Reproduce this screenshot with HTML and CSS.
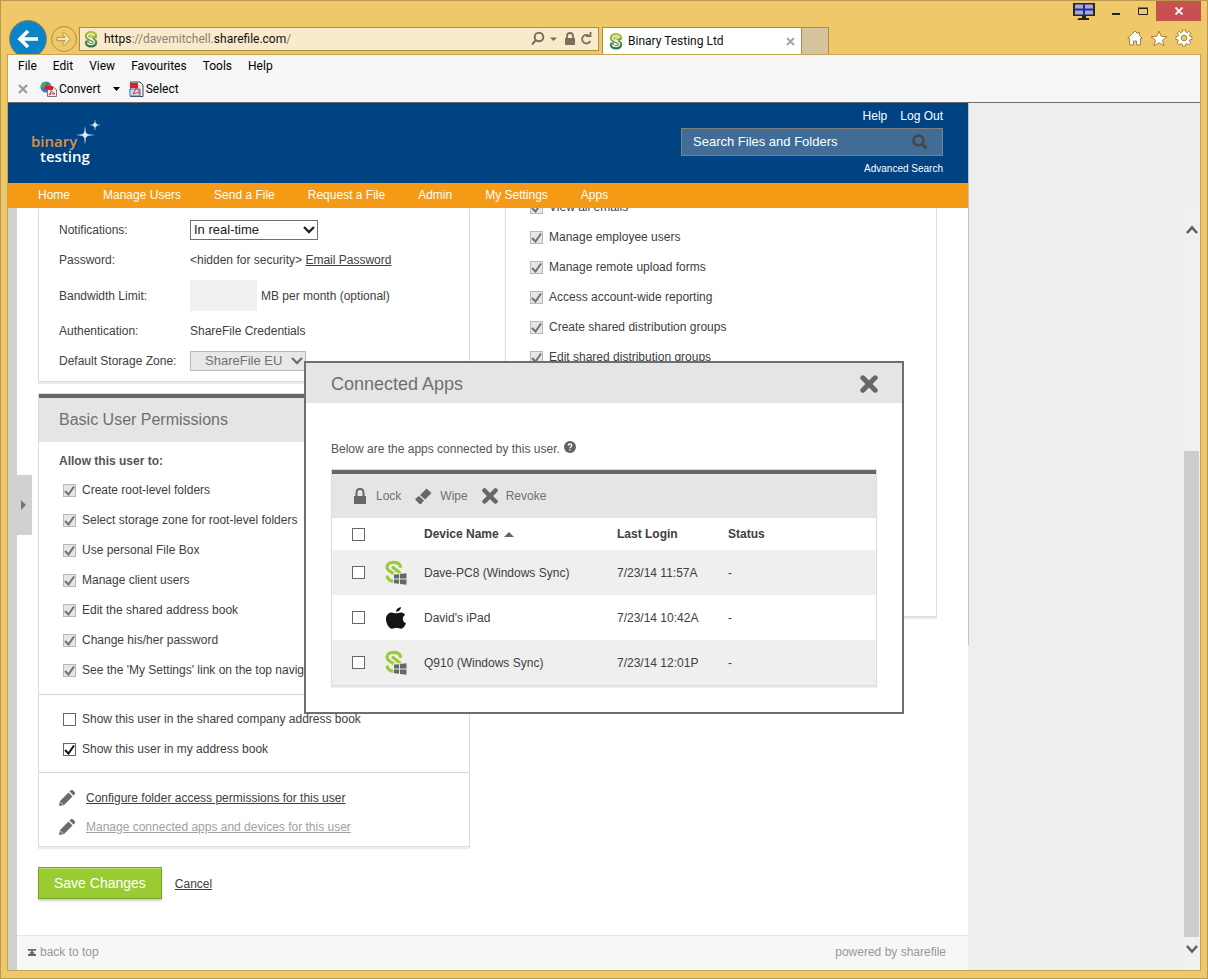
FILE: index.html
```
<!DOCTYPE html>
<html lang="en">
<head>
<meta charset="utf-8">
<title>Binary Testing Ltd</title>
<link rel="stylesheet" href="styles.css">
</head>
<body>
<svg class="defs" aria-hidden="true">
  <symbol id="i-favicon" viewBox="0 0 14 18">
    <defs><linearGradient id="fav" x1="0" y1="0" x2="0" y2="1"><stop offset="0" stop-color="#b4c032"/><stop offset="1" stop-color="#2f7a4a"/></linearGradient></defs>
    <path d="M11 6C10.500 2.500 3 2 3 6c0 3.500 8 2.500 8 6.500 0 4-7.500 3.500-8 0" fill="none" stroke="url(#fav)" stroke-width="4.500" stroke-linecap="round"/>
    <path d="M10.500 6C10 3.500 3.500 3 3.500 6.300c0 3 7 2.500 7 6 0 3.200-6.500 2.700-7 .2M6 7.500l3 2" fill="none" stroke="#f4f8e4" stroke-width="1.300"/>
  </symbol>
  <symbol id="i-share" viewBox="0 0 22 25">
    <path d="M15.500 6.500C14 .8 2 1 2 7c0 2 1 3 2.500 4l8 5.500M8 7.500l5.500 4.200c4.500 3.500 2.500 9.800-3 9.800C6 21.500 3.500 20.500 2.300 17" fill="none" stroke="#98cb36" stroke-width="3.200" stroke-linecap="round"/>
    <path d="M8 13h14v12H8z" fill="#efefef" opacity=".75"/>
    <path d="M9 14.800l5-.6v4.300H9zM15 14l6.500-.8v5.300H15zM9 19.500h5v4.300l-5-.6zM15 19.500h6.500v5.300L15 24z" fill="#66676a"/>
  </symbol>
  <symbol id="i-pencil" viewBox="0 0 16 16">
    <path d="M0 16l1-5 8.500-8.500L13.500 6.500 5 15zM10.500 1.500L12 0h1.500L16 2.500V4l-1.500 1.500z" fill="#6a6b6e"/>
    <path d="M1.500 12l2.500 2.500" stroke="#fff" stroke-width=".8"/>
  </symbol>
  <symbol id="i-cross" viewBox="0 0 16 16">
    <path d="M2.500 2.500l11 11M13.500 2.500l-11 11" stroke="#66676a" stroke-width="4.500" stroke-linecap="round"/>
  </symbol>
</svg>

<div class="window">
  <header class="chrome">
    <div class="travel">
      <button class="back" type="button" aria-label="Back"><svg width="22" height="20" viewBox="0 0 22 20"><path d="M11 2L3 10l8 8M3.500 10H21" fill="none" stroke="#fff" stroke-width="3.600"/></svg></button>
      <button class="forward" type="button" aria-label="Forward"><svg width="16" height="14" viewBox="0 0 16 14"><path d="M1 5.300h8L6 2l2-1.500L14.500 7 8 13.500 6 12l3-3.300H1z" fill="#f6e3b4" stroke="#b08f42" stroke-width="1"/></svg></button>
    </div>
    <div class="address">
      <svg width="14" height="18"><use href="#i-favicon"/></svg>
      <span class="url"><i>https</i>://davemitchell.<i>sharefile.com</i>/</span>
      <svg width="62" height="16" viewBox="0 0 62 16" fill="none" stroke="#77705c" stroke-width="2"><circle cx="8" cy="6" r="4.300"/><path d="M5 9l-4 4.500"/><path d="M19 6.500h7L22.500 10z" fill="#77705c" stroke="none"/><path d="M34 7h10v7H34z" fill="#77705c" stroke="none"/><path d="M36 8V5q0-3 3-3t3 3v3" stroke-width="1.800"/><path d="M58.500 5.200A4.300 4.300 0 1 0 59.300 10M55 5.200h4.500V1"  stroke-width="1.800"/></svg>
    </div>
    <div class="tabs">
      <div class="tab"><svg width="14" height="18"><use href="#i-favicon"/></svg><span>Binary Testing Ltd</span><svg width="9" height="9" viewBox="0 0 9 9"><path d="M1 1l7 7M8 1L1 8" stroke="#a6a6a6" stroke-width="2"/></svg></div>
      <button class="newtab" type="button" aria-label="New tab"></button>
    </div>
    <div class="corner">
      <div class="controls">
        <svg class="monitor" width="22" height="17" viewBox="0 0 22 17"><path d="M0 0h22v13H0z" fill="#26262b"/><path d="M2 1.500h18v10H2z" fill="#a9a6dc"/><path d="M10 1h2v11h-2zM2 5.500h18v2H2z" fill="#2b2a9a"/><path d="M9 13h4v2h3v2H4l2-2h3z" fill="#222"/></svg>
        <button type="button" aria-label="Minimise"><svg width="10" height="10" viewBox="0 0 10 10"><path d="M1 8h8" stroke="#222" stroke-width="2"/></svg></button>
        <button type="button" aria-label="Maximise"><svg width="10" height="8" viewBox="0 0 10 8"><path d="M.5 1.500h9v6h-9zM0 1h10" fill="none" stroke="#222" stroke-width="1"/></svg></button>
        <button class="close" type="button" aria-label="Close"><svg width="8" height="8" viewBox="0 0 8 8"><path d="M.5.5l7 7M7.500.5l-7 7" stroke="#fff" stroke-width="1.800"/></svg></button>
      </div>
      <div class="shortcuts">
        <svg width="16" height="16" viewBox="0 0 16 16"><path d="M8 1L.7 8.300h1.800V15h4v-4h3v4h4V8.300h1.800L12.500 5.500V2.500h-1.700v1.300z" fill="#fff" stroke="#a4843c" stroke-width="1"/></svg>
        <svg width="18" height="17" viewBox="0 0 18 17"><path d="M9 1l2.200 5.300 5.800.3-4.500 3.600 1.500 5.600L9 12.700l-5 3.100 1.500-5.600L1 6.600l5.800-.3z" fill="#fff" stroke="#a4843c" stroke-width="1"/></svg>
        <svg width="18" height="18" viewBox="0 0 18 18"><path d="M7.500 1h3l.4 2 1.300.6L14 2.400 15.800 4.200 14.500 6l.5 1.500 2 .4v2.500l-2 .4-.6 1.400 1.300 1.800-1.900 1.900-1.800-1.200-1.400.5-.4 2h-2.600l-.4-2-1.500-.5-1.800 1.200-1.800-1.900 1.200-1.800L2.900 10.800l-2-.4V7.900l2-.4L3.500 6 2.300 4.200 4.100 2.400l1.800 1.200L7.200 3z" fill="#fff" stroke="#a4843c" stroke-width="1"/><circle cx="9" cy="9" r="2.800" fill="#efc869" stroke="#a4843c"/></svg>
      </div>
    </div>
  </header>

  <div class="client">
    <div class="bars">
      <nav class="menubar" aria-label="Browser menu"><span>File</span><span>Edit</span><span>View</span><span>Favourites</span><span>Tools</span><span>Help</span></nav>
      <div class="toolbar">
        <svg width="10" height="10" viewBox="0 0 10 10"><path d="M1 1l8 8M9 1L1 9" stroke="#999" stroke-width="2"/></svg>
        <span class="tool"><svg width="17" height="16" viewBox="0 0 17 16"><circle cx="6" cy="6" r="5.500" fill="#3a79c8"/><path d="M2 2q3-2 4 0l-1 3-3 2-1.500-1zM7 6l3-3 1.500 3-3 3z" fill="#57ab3a"/><path d="M7.500 5.500h5l4 3v7h-9z" fill="#f3f3f3" stroke="#777"/><path d="M5 5h8v4H5z" fill="#e02020"/><path d="M9 14q3-4 2-4.500t4 3.500q-4-1-6 1z" fill="none" stroke="#d33"/></svg>Convert</span>
        <svg class="caret" width="7" height="4" viewBox="0 0 7 4"><path d="M0 0h7L3.500 4z"/></svg>
        <span class="tool"><svg width="15" height="16" viewBox="0 0 15 16"><path d="M1.500 1h9.500l3 3v11.500H1.500z" fill="#f3f3f3" stroke="#444"/><path d="M1 2h8v5H1z" fill="#e02020"/><path d="M1 8h10v7H1z" fill="#cfe0f6" stroke="#3a6dc0"/><path d="M4 13q3-5 3-6t4 5q-4-1-7 1z" fill="none" stroke="#d33"/></svg>Select</span>
      </div>
    </div>

    <div class="viewport">
      <div class="site">
        <header class="masthead">
          <a class="brand" href="#"><span class="brand-a">binary</span><span class="brand-b">testing</span>
            <svg class="sparks" width="30" height="30" viewBox="0 0 30 30" fill="#dfeaf6"><path d="M10 8l1 8 9 1-9 1-1 9-1-9-8-1 8-1zM20 1l.8 5.200L26 7l-5.200.8L20 13l-.8-5.200L14 7l5.200-.8z"/><circle cx="10" cy="17" r="2.500"/><circle cx="20" cy="7" r="2"/></svg></a>
          <div class="account">
            <div class="account-links"><a href="#">Help</a><a href="#">Log Out</a></div>
            <form class="search">
              <input type="text" placeholder="Search Files and Folders" aria-label="Search Files and Folders">
              <button type="button" aria-label="Search"><svg width="16" height="16" viewBox="0 0 16 16" fill="none" stroke="#474747"><circle cx="6.500" cy="6.500" r="5" stroke-width="2.400"/><path d="M10 10l4.500 4.500" stroke-width="3"/></svg></button>
            </form>
            <a class="advanced" href="#">Advanced Search</a>
          </div>
        </header>
        <nav class="mainnav"><a href="#">Home</a><a href="#">Manage Users</a><a href="#">Send a File</a><a href="#">Request a File</a><a href="#">Admin</a><a href="#">My Settings</a><a href="#">Apps</a></nav>

        <div class="body">
          <button class="drawer" type="button" aria-label="Open side panel"><svg width="5" height="10" viewBox="0 0 5 10"><path d="M0 0l5 5-5 5z" fill="#777"/></svg></button>
          <main class="main">
            <div class="columns">
              <div class="column">
                <section class="card details">
                  <div class="field"><label for="notify">Notifications:</label><span class="pick"><select id="notify"><option>In real-time</option></select><svg width="12" height="8" viewBox="0 0 12 8"><path d="M1 1l5 5 5-5" fill="none" stroke="#222" stroke-width="2.400"/></svg></span></div>
                  <div class="field"><span>Password:</span><span>&lt;hidden for security&gt; <a href="#">Email Password</a></span></div>
                  <div class="field tall"><label for="bw">Bandwidth Limit:</label><span class="limit"><input id="bw" type="text" disabled> MB per month (optional)</span></div>
                  <div class="field"><span>Authentication:</span><span>ShareFile Credentials</span></div>
                  <div class="field"><label for="zone">Default Storage Zone:</label><span class="pick zone"><select id="zone" disabled><option>ShareFile EU</option></select><svg width="12" height="8" viewBox="0 0 12 8"><path d="M1 1l5 5 5-5" fill="none" stroke="#707070" stroke-width="2.400"/></svg></span></div>
                </section>

                <section class="card perms">
                  <h2>Basic User Permissions</h2>
                  <h3>Allow this user to:</h3>
                  <div class="checks">
                    <label><input type="checkbox" checked disabled>Create root-level folders</label>
                    <label><input type="checkbox" checked disabled>Select storage zone for root-level folders</label>
                    <label><input type="checkbox" checked disabled>Use personal File Box</label>
                    <label><input type="checkbox" checked disabled>Manage client users</label>
                    <label><input type="checkbox" checked disabled>Edit the shared address book</label>
                    <label><input type="checkbox" checked disabled>Change his/her password</label>
                    <label><input type="checkbox" checked disabled>See the 'My Settings' link on the top navigation bar</label>
                  </div>
                  <div class="checks ruled">
                    <label><input type="checkbox">Show this user in the shared company address book</label>
                    <label><input type="checkbox" checked>Show this user in my address book</label>
                  </div>
                  <div class="links ruled">
                    <div><svg width="16" height="16"><use href="#i-pencil"/></svg><a href="#">Configure folder access permissions for this user</a></div>
                    <div><svg width="16" height="16"><use href="#i-pencil"/></svg><a class="dim" href="#">Manage connected apps and devices for this user</a></div>
                  </div>
                </section>

                <div class="actions"><button class="save" type="button">Save Changes</button><a href="#">Cancel</a></div>
              </div>

              <div class="column">
                <section class="card admin">
                  <div class="checks">
                    <label><input type="checkbox" checked disabled>View all emails</label>
                    <label><input type="checkbox" checked disabled>Manage employee users</label>
                    <label><input type="checkbox" checked disabled>Manage remote upload forms</label>
                    <label><input type="checkbox" checked disabled>Access account-wide reporting</label>
                    <label><input type="checkbox" checked disabled>Create shared distribution groups</label>
                    <label><input type="checkbox" checked disabled>Edit shared distribution groups</label>
                  </div>
                </section>
              </div>
            </div>
            <footer class="footer">
              <a href="#"><svg width="8" height="7" viewBox="0 0 8 7"><path d="M0 0h8v1.800H0zM4 1.500l3 3H5.200V5H8v2H0V5h2.800v-.5H1z" fill="#666"/></svg>back to top</a>
              <span>powered by sharefile</span>
            </footer>
          </main>
        </div>
      </div>

      <div class="gutter">
        <div class="scrollbar" aria-hidden="true">
          <svg width="12" height="9" viewBox="0 0 12 9"><path d="M1 8l5-5.500L11 8" fill="none" stroke="#606060" stroke-width="2.600"/></svg>
          <div class="thumb"></div>
          <svg width="12" height="9" viewBox="0 0 12 9"><path d="M1 1l5 5.500L11 1" fill="none" stroke="#606060" stroke-width="2.600"/></svg>
        </div>
      </div>
    </div>
  </div>

  <section class="modal" role="dialog" aria-labelledby="modal-title">
    <header><h2 id="modal-title">Connected Apps</h2><button type="button" aria-label="Close"><svg width="18" height="18"><use href="#i-cross"/></svg></button></header>
    <div class="modal-body">
      <p>Below are the apps connected by this user. <svg width="12" height="12" viewBox="0 0 12 12"><circle cx="6" cy="6" r="6" fill="#626262"/><path d="M4.200 4.800Q4.300 3 6 3t1.800 1.600Q7.800 5.500 6.800 6 6 6.400 6 7.200M6 8.200v1.300" fill="none" stroke="#fff" stroke-width="1.300"/></svg></p>
      <div class="card apps">
        <div class="apps-tools">
          <button type="button"><svg width="16" height="16" viewBox="0 0 16 16"><path d="M2 8h12v8H2z" fill="#66676a"/><path d="M4.500 8V5q0-4 3.500-4t3.500 4v3" fill="none" stroke="#66676a" stroke-width="2"/></svg>Lock</button>
          <button type="button"><svg width="17" height="16" viewBox="0 0 17 16"><path d="M5 7L11.500.5 16.500 5 10 11.500zM4 8l5 4.500L6 16H4.500L.5 12v-1.500z" fill="#66676a"/></svg>Wipe</button>
          <button type="button"><svg width="16" height="16"><use href="#i-cross"/></svg>Revoke</button>
        </div>
        <table>
          <colgroup><col class="c-check"><col class="c-icon"><col class="c-name"><col class="c-login"><col></colgroup>
          <thead><tr><th><input type="checkbox" aria-label="Select all"></th><th></th><th>Device Name <svg width="10" height="5" viewBox="0 0 10 5"><path d="M5 0l5 5H0z" fill="#666"/></svg></th><th>Last Login</th><th>Status</th></tr></thead>
          <tbody>
            <tr><td><input type="checkbox" aria-label="Dave-PC8"></td><td><svg width="22" height="25"><use href="#i-share"/></svg></td><td>Dave-PC8 (Windows Sync)</td><td>7/23/14 11:57A</td><td>-</td></tr>
            <tr><td><input type="checkbox" aria-label="David's iPad"></td><td><svg width="22" height="25" viewBox="0 0 22 25"><path d="M16 2q0 4-5 5 0-4 5-5zM6 7.500c2-.5 3.500 1 5.200.8 1.800 0 3-1 5-.8 2 .2 3.200 1.200 4 2.300-3.500 2.200-3 6.800.8 8.400-1 2.600-2.800 5.300-4.800 5.500-1.800.1-2.600-1-4.700-1s-3 1.100-4.700 1C4 23.500 1.200 18.800 1 14.500c-.1-4 2-6.500 5-7z" fill="#151515"/></svg></td><td>David's iPad</td><td>7/23/14 10:42A</td><td>-</td></tr>
            <tr><td><input type="checkbox" aria-label="Q910"></td><td><svg width="22" height="25"><use href="#i-share"/></svg></td><td>Q910 (Windows Sync)</td><td>7/23/14 12:01P</td><td>-</td></tr>
          </tbody>
        </table>
      </div>
    </div>
  </section>
</div>
</body>
</html>
```

FILE: styles.css
```
* { box-sizing: border-box; }
body { margin: 0; font: 12px/16px "Liberation Sans", Arial, sans-serif; color: #404040; }
h2, h3, p { margin: 0; font-weight: normal; }
a { color: inherit; }
svg { display: block; flex: none; }
button { padding: 0; border: 0; background: none; font: inherit; color: inherit; }
.defs { position: absolute; width: 0; height: 0; }

.window { position: relative; display: flex; flex-direction: column; min-height: 100vh; border: 1px solid #b8994f; background: #efc869; }

/* Browser chrome */
.chrome { display: flex; height: 53px; overflow: hidden; font-family: Roboto, sans-serif; color: #111; }
.travel { display: flex; flex: none; align-items: center; gap: 4px; width: 78px; padding: 18px 0 0 8px; height: 57px; }
.back { display: grid; place-items: center; width: 38px; height: 38px; border: 1px solid #9a8148; border-radius: 50%; background: #0a84c6; }
.forward { display: grid; place-items: center; width: 26px; height: 26px; border: 1px solid #b08f42; border-radius: 50%; }
.address { display: flex; flex: 1 1 520px; align-items: center; gap: 6px; min-width: 0; height: 24px; margin: 26px 3px 0 0; padding: 0 5px 0 4px; border: 1px solid #a98c45; background: #f9eacb; }
.url { flex: 1; color: #8a8270; }
.url i { font-style: normal; color: #111; }
.tabs { display: flex; flex: none; padding-top: 26px; }
.tab { display: flex; align-items: center; gap: 5px; width: 200px; padding: 0 6px; border: solid #a98c45; border-width: 1px 1px 0; background: #fff; }
.tab span { flex: 1; }
.newtab { width: 27px; border: solid #a98c45; border-width: 1px 1px 0 0; background: #d5c49e; }
.corner { flex: 1 1 378px; padding-right: 6px; }
.controls { display: flex; align-items: stretch; justify-content: flex-end; height: 20px; }
.controls button { display: grid; place-items: center; width: 27px; }
.controls .close { width: 45px; background: #c75050; }
.monitor { margin: 2px 7px 0 0; }
.shortcuts { display: flex; align-items: center; justify-content: flex-end; gap: 7px; padding: 8px 8px 0 0; }

.client { display: flex; flex: 1; flex-direction: column; margin: 0 6px 7px; border: 1px solid #c6a456; }
.bars { height: 48px; padding: 2px 10px 0; border-bottom: 1px solid #6d6d6d; background: #f6f6f6; font-family: Roboto, sans-serif; color: #000; }
.menubar { display: flex; gap: 16px; line-height: 18px; }
.toolbar { display: flex; align-items: center; gap: 12px; margin-top: 6px; }
.tool { display: flex; align-items: center; gap: 2px; }
.caret + .tool { margin-left: -3px; }

/* Page */
.viewport { display: flex; flex: 1; background: #eee; }
.site { position: relative; display: flex; flex: 0 1 960px; flex-direction: column; background: #fff; }
.site::after { content: ""; position: absolute; top: 0; left: 100%; width: 1px; height: 542px; background: #c6c6c6; }
.masthead { display: flex; justify-content: space-between; height: 80px; padding: 5px 25px 0 23px; background: #004382; color: #fff; }
.masthead a, .mainnav a { color: #fff; text-decoration: none; }
.brand { position: relative; padding-top: 26px; font: 600 15px/15px "Open Sans", sans-serif; }
.brand span { display: block; }
.brand .brand-a { color: #d99145; }
.brand-b { margin-left: 9px; }
.sparks { position: absolute; top: 10px; left: 44px; }
.account { display: flex; flex-direction: column; align-items: flex-end; }
.account-links { display: flex; gap: 13px; }
.search { display: flex; align-items: center; width: 262px; height: 28px; margin: 4px 0 5px; padding: 0 14px 0 11px; border: 1px solid #7f7f7f; background: #406c95; }
.search input { flex: 1; min-width: 0; padding: 0; border: 0; outline: 0; background: none; font: 13px/16px "Liberation Sans", Arial, sans-serif; color: #fff; }
.search input::placeholder { color: #fff; opacity: 1; }
.advanced { font-size: 10px; }
.mainnav { display: flex; gap: 33px; height: 25px; padding: 4px 30px; background: #f59a14; }

.body { position: relative; display: flex; flex: 1; padding-left: 9px; background: #d3d1cf; }
.drawer { position: absolute; top: 267px; left: 9px; display: grid; place-items: center; width: 15px; height: 60px; padding-right: 2px; background: #d3d1cf; }
.main { display: flex; flex: 1; flex-direction: column; background: #fff; }
.columns { display: grid; grid-template-columns: 1fr 1fr; flex: 1; align-items: start; gap: 35px; padding: 0 31px 24px 21px; overflow: hidden; }
.card { border: 1px solid #dcdcdc; background: #fff; box-shadow: 0 2px 1px #ececec; }
.details { padding: 7px 20px 5px; border-top: 0; }
.field { display: grid; grid-template-columns: 131px 1fr; align-items: center; height: 30px; }
.field.tall { height: 41px; }
.limit { display: flex; align-items: center; gap: 4px; }
.limit input { width: 67px; height: 31px; border: 0; background: #f0f0f0; }
.pick { position: relative; display: block; width: 128px; }
.pick select { appearance: none; display: block; width: 100%; height: 20px; padding: 0 3px; border: 1px solid #707070; border-radius: 0; background: #fff; font: 13px/16px "Liberation Sans", Arial, sans-serif; color: #222; }
.pick svg { position: absolute; top: 6px; right: 3px; pointer-events: none; }
.pick.zone { width: 116px; }
.zone select { padding-left: 14px; border-color: #b8b8b8; background: #e8e8e8; color: #707070; opacity: 1; }

.perms { margin-top: 11px; }
.perms h2 { padding: 12px 20px; border-top: 4px solid #666; background: #e5e5e5; font-size: 16px; line-height: 20px; color: #707070; }
.perms h3 { padding: 11px 20px 6px; font-size: 12px; font-weight: bold; color: #555; }
.checks { padding: 0 24px 9px; }
.checks label { display: flex; align-items: center; gap: 6px; height: 30px; white-space: nowrap; }
.ruled { border-top: 1px solid #d5d5d5; }
.checks.ruled { padding: 9px 24px 8px; }
.links { padding: 10px 20px 5px; }
.links div { display: flex; align-items: center; gap: 11px; height: 29px; }
.links .dim { color: #a0a0a0; }
.admin { margin-top: -17px; padding-bottom: 235px; }

input[type="checkbox"] { appearance: none; flex: none; display: block; width: 13px; height: 13px; margin: 0; border: 1px solid #666; background: #fff; }
input[type="checkbox"]:checked { background: url("data:image/svg+xml,%3Csvg xmlns='http://www.w3.org/2000/svg' viewBox='0 0 11 11'%3E%3Cpath d='M1 6l3.500 3.500L10 1.500' fill='none' stroke='%23111' stroke-width='2'/%3E%3C/svg%3E"); }
input[type="checkbox"]:checked:disabled { border-color: #b8b8b8; background: #e6e6e6 url("data:image/svg+xml,%3Csvg xmlns='http://www.w3.org/2000/svg' viewBox='0 0 11 11'%3E%3Cpath d='M1 6l3.500 3.500L10 1.500' fill='none' stroke='%23707070' stroke-width='2'/%3E%3C/svg%3E"); }

.actions { display: flex; align-items: baseline; gap: 13px; margin-top: 20px; }
.save { height: 32px; padding: 0 15px; border: 1px solid #7ba428; background: #99cc33; box-shadow: 0 2px 2px #d0d0d0, inset 0 1px #b5dc68; font-size: 14px; color: #fff; }
.footer { display: flex; justify-content: space-between; height: 35px; padding: 8px 22px 0 11px; border-top: 1px solid #e6e6e6; background: #f7f7f7; color: #999; }
.footer a { display: flex; align-items: center; gap: 4px; height: 16px; text-decoration: none; }

.gutter { display: flex; flex: 1; justify-content: flex-end; padding: 105px 0 0; }
.scrollbar { display: flex; flex-direction: column; align-items: center; width: 17px; padding: 17px 0 16px; background: #f0f0f0; }
.thumb { flex: 1; width: 15px; margin: 217px 0 8px; background: #cdcdcd; }

/* Connected apps dialog */
.modal { position: absolute; top: 360px; left: 0; right: 0; width: 600px; max-width: 100%; margin: 0 auto; border: 2px solid #6d6e71; background: #fff; color: #555; }
.modal header { display: flex; align-items: center; justify-content: space-between; height: 40px; padding: 1px 24px 0 25px; background: #e5e5e5; }
.modal h2 { font-size: 18px; line-height: 20px; color: #707070; }
.modal-body { padding: 38px 25px 26px; }
.modal p { display: flex; gap: 4px; margin-bottom: 12px; }
.apps { color: #404040; }
.apps-tools { display: flex; gap: 14px; height: 48px; padding: 0 20px; border-top: 4px solid #666; background: #e5e5e5; color: #707070; }
.apps-tools button { display: flex; align-items: center; gap: 8px; }
table { width: 100%; border-collapse: collapse; table-layout: fixed; }
th, td { padding: 0; text-align: left; white-space: nowrap; }
th:first-child, td:first-child { padding-left: 20px; }
th svg { display: inline-block; margin-left: 2px; vertical-align: 1px; }
thead tr { height: 32px; }
tbody tr { height: 45px; }
tbody tr:nth-child(odd) { background: #efefef; }
.c-check { width: 53px; }
.c-icon { width: 39px; }
.c-name { width: 193px; }
.c-login { width: 111px; }
```
